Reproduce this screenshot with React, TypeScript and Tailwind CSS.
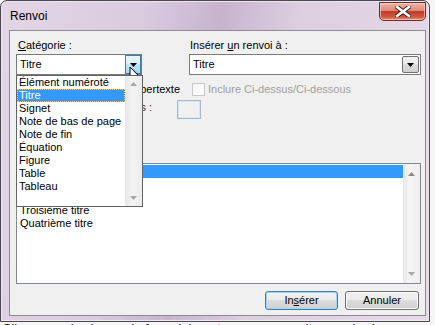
import React from 'react';

const categories = [
  'Élément numéroté',
  'Titre',
  'Signet',
  'Note de bas de page',
  'Note de fin',
  'Équation',
  'Figure',
  'Table',
  'Tableau',
];

const headings = ['Titre principal', 'Premier titre', 'Deuxième titre', 'Troisième titre', 'Quatrième titre'];

const Arrow = ({ up = false, className = '' }: { up?: boolean; className?: string }) => (
  <svg width="7" height="4" viewBox="0 0 7 4" className={className}>
    <path d={up ? 'M0 4 L3.5 0 L7 4 Z' : 'M0 0 L7 0 L3.5 4 Z'} fill="currentColor" />
  </svg>
);

const CheckBox = ({ disabled = false }: { disabled?: boolean }) => (
  <div
    className={
      disabled
        ? 'w-[13px] h-[13px] border border-[#c8c8c8] bg-[linear-gradient(135deg,#f4f4f4,#ffffff)] shrink-0'
        : 'w-[13px] h-[13px] border border-[#8e8f8f] bg-white shrink-0'
    }
  />
);

export default function App() {
  return (
    <div className="relative w-[435px] h-[325px] overflow-hidden bg-[#f6f6f6] font-['Liberation_Sans',Arial,sans-serif] text-[11px] leading-[13px] text-black">
      {/* document behind the dialog */}
      <div className="h-full flex flex-col justify-end">
        <div className="whitespace-nowrap text-[13px] leading-[15px] text-[#222] mb-[-11px] pl-[2px]">
          Cliquez sur le champ de formulaire, et appuyez ensuite pour insérer
        </div>
      </div>

      {/* dialog window */}
      <div className="absolute left-0 top-0 w-[430px] h-[322px] rounded-t-[7px] border border-[#4b4452] bg-[linear-gradient(100deg,#e2d6e5_0%,#dacbdf_30%,#c8b3cf_46%,#dccfe0_62%,#e5dbe8_100%)] shadow-[inset_0_0_0_1px_#efe8f1] flex flex-col">
        {/* title bar */}
        <div className="h-[29px] flex items-start justify-between">
          <div className="pl-[9px] pt-[8px] text-[12px] leading-[14px] text-black">Renvoi</div>
          <div className="mt-[1px] mr-[3px] w-[47px] h-[19px] rounded-b-[5px] border border-[#6e2a24] bg-[linear-gradient(180deg,#eeb4a8_0%,#dc8b7a_45%,#c43a28_50%,#d0553e_80%,#e3907a_100%)] shadow-[inset_0_0_0_1px_rgba(255,220,210,0.6)] flex items-center justify-center">
            <svg width="16" height="11" viewBox="0 0 16 11">
              <path d="M2 1 L14 10 M14 1 L2 10" stroke="#3b1a17" strokeWidth="4.4" strokeLinecap="square" />
              <path d="M2 1 L14 10 M14 1 L2 10" stroke="#ffffff" strokeWidth="2.6" strokeLinecap="square" />
            </svg>
          </div>
        </div>

        {/* client area */}
        <div className="ml-[8px] w-[417px] h-[286px] border border-[#8f8a93] bg-[#f0f0f0] pl-[6px] pr-[4px] pt-[8px] flex flex-col">
          <div className="flex gap-[47px]">
            {/* left column */}
            <div className="w-[126px] relative">
              <div className="pl-[2px] h-[13px]">
                <span className="underline">C</span>atégorie :
              </div>
              <div className="mt-[2px] h-[21px] border border-[#7a7a7a] bg-white flex items-center">
                <div className="flex-1 pl-[3px]">Titre</div>
                <div className="w-[16px] h-[19px] border border-[#3c7fb1] bg-[linear-gradient(180deg,#eaf6fd_0%,#d9f0fc_45%,#bee6fd_50%,#a7d9f5_100%)] flex items-center justify-center">
                  <Arrow className="text-black" />
                </div>
              </div>

              {/* open dropdown list */}
              <div className="absolute left-0 top-full w-[127px] h-[132px] border border-[#646464] bg-white flex z-10">
                <div className="flex-1">
                  {categories.map((c) => (
                    <div
                      key={c}
                      className={
                        c === 'Titre'
                          ? 'h-[13px] pl-[2px] bg-[#3399ff] text-white outline outline-1 outline-dotted outline-[#f6c070] -outline-offset-1 whitespace-nowrap'
                          : 'h-[13px] pl-[2px] whitespace-nowrap'
                      }
                    >
                      {c}
                    </div>
                  ))}
                </div>
                <div className="w-[17px] bg-[linear-gradient(90deg,#e6e6e6,#f4f4f4_40%,#ececec)] flex flex-col items-center justify-between py-[6px]">
                  <Arrow up className="text-[#a8a8a8]" />
                  <Arrow className="text-[#a8a8a8]" />
                </div>
              </div>
            </div>

            {/* right column */}
            <div className="w-[232px]">
              <div className="pl-[1px] h-[13px]">
                Insérer <span className="underline">u</span>n renvoi à :
              </div>
              <div className="mt-[2px] h-[21px] border border-[#7a7a7a] bg-white flex items-center">
                <div className="flex-1 pl-[3px]">Titre</div>
                <div className="w-[17px] h-[17px] mr-[1px] border border-[#707070] rounded-[2px] bg-[linear-gradient(180deg,#f2f2f2_0%,#ebebeb_45%,#dddddd_50%,#cfcfcf_100%)] flex items-center justify-center">
                  <Arrow className="text-black" />
                </div>
              </div>
            </div>
          </div>

          {/* hyperlink / above-below row */}
          <div className="mt-[8px] h-[13px] flex items-center">
            <div className="w-[173px] pr-[9px] flex justify-end items-center gap-[4px] overflow-hidden whitespace-nowrap">
              <CheckBox />
              <span>Insérer comme lien hypertexte</span>
            </div>
            <div className="ml-[3px] flex items-center gap-[3px]">
              <CheckBox disabled />
              <span className="text-[#a0a0a0]">Inclure Ci-dessus/Ci-dessous</span>
            </div>
          </div>

          {/* separator row */}
          <div className="mt-[4px] flex items-start">
            <div className="w-[136px] pt-[1px] flex justify-end whitespace-nowrap overflow-hidden text-[#333]">
              <span>Séparer les numéros par des :</span>
            </div>
            <div className="ml-[25px] w-[24px] h-[19px] border border-[#a7b7cc] bg-[#f0f0f0] shadow-[inset_0_0_0_1px_#dce6f2]" />
          </div>

          <div className="mt-[29px] h-[13px] pl-[2px]">Pour quel titre :</div>

          {/* heading list */}
          <div className="mt-[2px] h-[121px] border border-[#828790] bg-white flex">
            <div className="flex-1 pt-[1px]">
              {headings.map((h, i) => (
                <div key={h} className={i === 0 ? 'h-[13px] pl-[3px] bg-[#3399ff] text-white' : 'h-[13px] pl-[3px]'}>
                  {h}
                </div>
              ))}
            </div>
            <div className="w-[17px] bg-[linear-gradient(90deg,#e8e8e8,#f5f5f5_40%,#ededed)] flex flex-col items-center justify-between pt-[8px] pb-[7px]">
              <Arrow up className="text-[#8a8a8a]" />
              <Arrow className="text-[#a8a8a8]" />
            </div>
          </div>

          {/* buttons */}
          <div className="mt-[7px] pr-[2px] flex justify-end gap-[7px]">
            <button className="w-[73px] h-[19px] rounded-[3px] border border-[#3c7fb1] bg-[linear-gradient(180deg,#f2f2f2_0%,#ebebeb_45%,#dddddd_50%,#cfcfcf_100%)] shadow-[inset_0_0_0_1px_#9fd6f5] text-[11px] leading-[13px]">
              In<span className="underline">s</span>érer
            </button>
            <button className="w-[74px] h-[19px] rounded-[3px] border border-[#707070] bg-[linear-gradient(180deg,#f2f2f2_0%,#ebebeb_45%,#dddddd_50%,#cfcfcf_100%)] shadow-[inset_0_0_0_1px_#fcfcfc] text-[11px] leading-[13px]">
              Annuler
            </button>
          </div>
        </div>
      </div>

      {/* mouse pointer */}
      <svg className="absolute left-[129px] top-[66px] drop-shadow-[2px_2px_1px_rgba(0,0,0,0.35)]" width="14" height="21" viewBox="0 0 14 21">
        <path d="M1 1 L1 16 L4.5 12.5 L7.5 19.5 L9.5 18.6 L6.6 11.8 L11.5 11.8 Z" fill="#ffffff" stroke="#000000" strokeWidth="1" strokeLinejoin="round" />
      </svg>
    </div>
  );
}
